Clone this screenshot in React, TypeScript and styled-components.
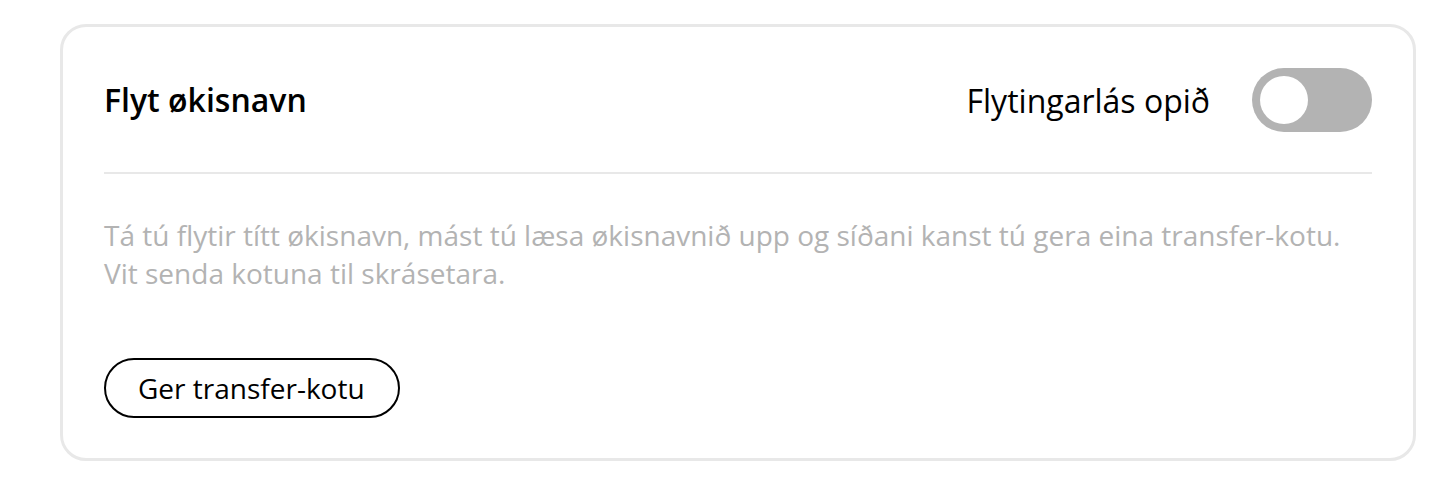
import React, { useState } from "react";
import styled, { createGlobalStyle } from "styled-components";

const Global = createGlobalStyle`
  html, body { margin: 0; padding: 0; background: #ffffff; }
  body { font-family: "Open Sans", "Noto Sans", sans-serif; color: #000; }
  * { box-sizing: border-box; }
`;

const Page = styled.div`
  padding: 24px 28px 0 60px;
`;

const Card = styled.section`
  width: 1356px;
  height: 437px;
  border: 3px solid #e8e8e8;
  border-radius: 26px;
  padding: 41px 41px 40px 41px;
  display: flex;
  flex-direction: column;
`;

const Header = styled.div`
  display: flex;
  align-items: center;
  justify-content: space-between;
  height: 64px;
`;

const Title = styled.h2`
  margin: 0;
  font-size: 32px;
  font-weight: 600;
  line-height: 1;
`;

const LockGroup = styled.label`
  display: flex;
  align-items: center;
  gap: 42px;
  cursor: pointer;
`;

const LockLabel = styled.span`
  font-size: 32px;
  font-weight: 400;
`;

const Switch = styled.button<{ $on: boolean }>`
  width: 120px;
  height: 64px;
  border: none;
  border-radius: 32px;
  padding: 8px;
  background: ${(p) => (p.$on ? "#3c8f5a" : "#b3b3b3")};
  display: flex;
  justify-content: ${(p) => (p.$on ? "flex-end" : "flex-start")};
  cursor: pointer;
`;

const Knob = styled.span`
  width: 48px;
  height: 48px;
  border-radius: 50%;
  background: #ffffff;
`;

const Divider = styled.hr`
  margin: 40px 0 0;
  border: none;
  height: 2px;
  background: #e8e8e8;
`;

const Description = styled.p`
  margin: 42px 0 0;
  font-size: 28px;
  line-height: 38px;
  color: #b3b3b3;
`;

const Actions = styled.div`
  margin-top: auto;
  display: flex;
`;

const OutlineButton = styled.button`
  height: 60px;
  padding: 0 33px 0 32px;
  border: 2px solid #000;
  border-radius: 30px;
  background: #fff;
  font-family: inherit;
  font-size: 28px;
  color: #000;
  cursor: pointer;
`;

export default function App() {
  const [open, setOpen] = useState(false);
  return (
    <>
      <Global />
      <Page>
        <Card>
          <Header>
            <Title>Flyt økisnavn</Title>
            <LockGroup>
              <LockLabel>Flytingarlás opið</LockLabel>
              <Switch $on={open} onClick={() => setOpen(!open)} aria-pressed={open}>
                <Knob />
              </Switch>
            </LockGroup>
          </Header>
          <Divider />
          <Description>
            Tá tú flytir títt økisnavn, mást tú læsa økisnavnið upp og síðani kanst tú gera eina transfer-kotu.
            <br />
            Vit senda kotuna til skrásetara.
          </Description>
          <Actions>
            <OutlineButton>Ger transfer-kotu</OutlineButton>
          </Actions>
        </Card>
      </Page>
    </>
  );
}
